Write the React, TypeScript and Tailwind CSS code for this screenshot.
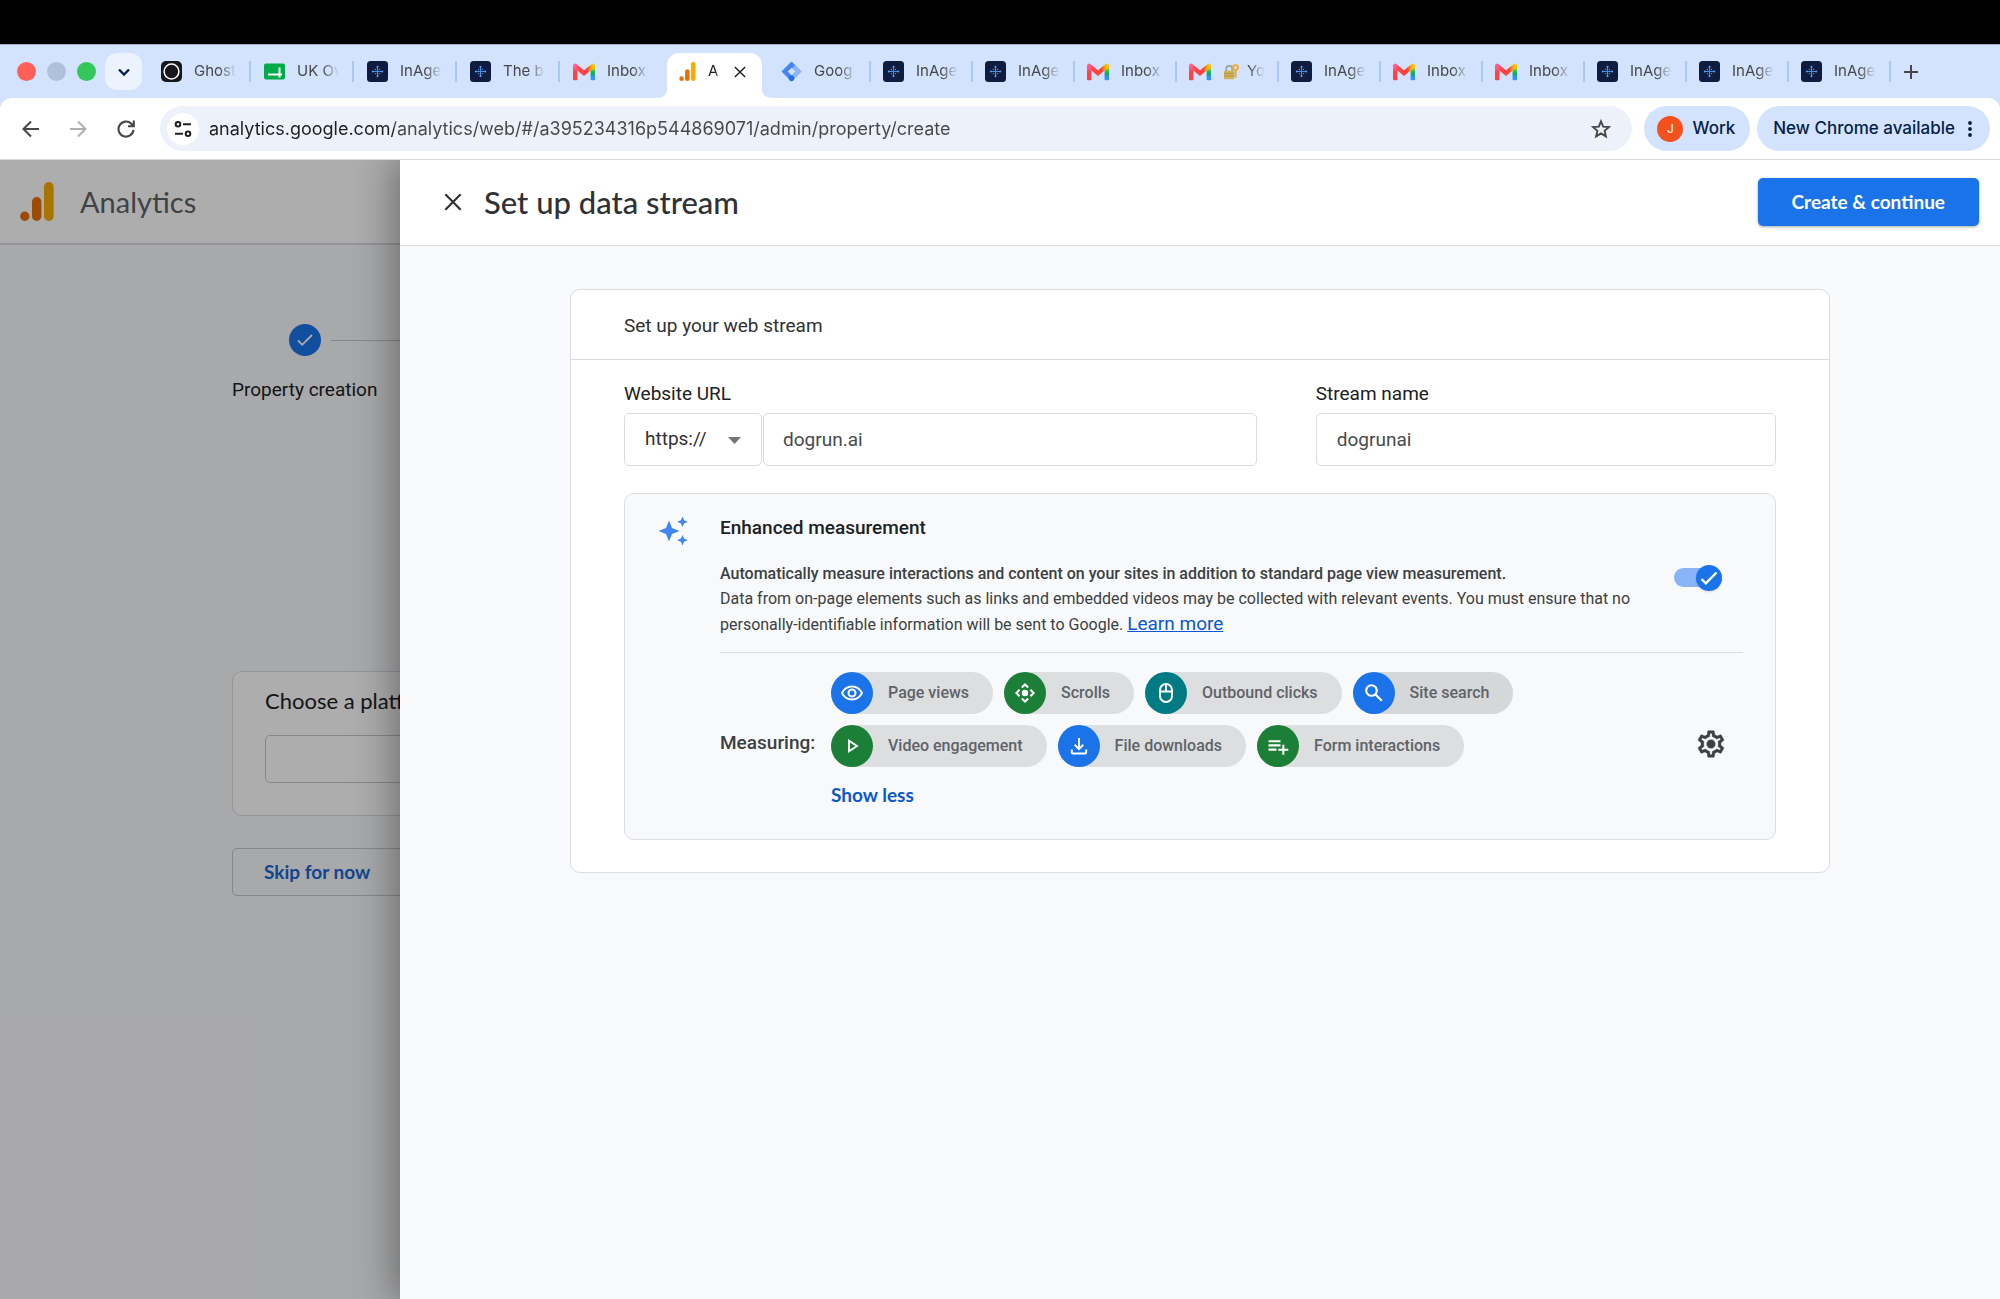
import { useState } from "react";

type IconProps = { className?: string };

function GhostIcon() {
  return (
    <svg className="size-[21px]" viewBox="0 0 21 21" aria-hidden="true">
      <rect width="21" height="21" rx="5" fill="#15171a" />
      <circle cx="10.5" cy="10.5" r="7.4" fill="none" stroke="#fff" strokeWidth="1.5" />
    </svg>
  );
}

function SheetIcon() {
  return (
    <svg className="size-[21px]" viewBox="0 0 21 21" aria-hidden="true">
      <rect y="2.5" width="21" height="16" rx="2" fill="#00ac47" />
      <path d="M4 13.5h14M15.500 6.500v10" stroke="#fff" strokeWidth="2" />
    </svg>
  );
}

function InAgentIcon() {
  return (
    <svg className="size-[21px]" viewBox="0 0 21 21" aria-hidden="true">
      <rect width="21" height="21" rx="3.5" fill="#0f1c3f" />
      <path d="M10.5 6v9M6 10.5h9" stroke="#4a90e2" strokeWidth="1.2" />
      <g fill="#5aa2f5">
        <circle cx="10.5" cy="5.8" r="1" />
        <circle cx="10.5" cy="15.2" r="1" />
        <circle cx="5.8" cy="10.5" r="1" />
        <circle cx="15.2" cy="10.5" r="1" />
        <circle cx="8.4" cy="8.4" r=".6" />
        <circle cx="12.6" cy="8.4" r=".6" />
        <circle cx="8.4" cy="12.6" r=".6" />
        <circle cx="12.6" cy="12.6" r=".6" />
      </g>
    </svg>
  );
}

function GmailIcon() {
  return (
    <svg className="size-[22px]" viewBox="0 0 22 22" aria-hidden="true">
      <defs>
        <linearGradient id="gm-left" x1="0" y1="0" x2="0" y2="1">
          <stop offset="0" stopColor="#ff63a0" />
          <stop offset=".45" stopColor="#ff4141" />
        </linearGradient>
        <linearGradient id="gm-right" x1="0" y1="0" x2="0" y2="1">
          <stop offset=".1" stopColor="#ffcf00" />
          <stop offset=".4" stopColor="#1db954" />
          <stop offset=".6" stopColor="#12a866" />
          <stop offset=".75" stopColor="#3290ff" />
        </linearGradient>
        <linearGradient id="gm-mid" x1="0" y1="0" x2="1" y2="0">
          <stop offset="0" stopColor="#ff5f93" />
          <stop offset=".25" stopColor="#ff4141" />
          <stop offset=".7" stopColor="#ff4141" />
          <stop offset=".95" stopColor="#ffc400" />
        </linearGradient>
      </defs>
      <path d="M0 5h4.4v13.2a1 1 0 0 1-1 1H1a1 1 0 0 1-1-1z" fill="url(#gm-left)" />
      <path d="M17.6 5H22v13.2a1 1 0 0 1-1 1h-2.4a1 1 0 0 1-1-1z" fill="url(#gm-right)" />
      <path d="M2.2 4.8 11 12.2l8.8-7.4" fill="none" stroke="url(#gm-mid)" strokeWidth="4.3" strokeLinecap="round" strokeLinejoin="miter" />
    </svg>
  );
}

function AnalyticsIcon({ className }: IconProps) {
  return (
    <svg className={className} viewBox="0 0 34 39" aria-hidden="true">
      <circle cx="4.8" cy="34.2" r="4.7" fill="#e8710a" />
      <rect x="12" y="15" width="9.4" height="24" rx="4.7" fill="#e8710a" />
      <rect x="24" y="0" width="9.6" height="39" rx="4.8" fill="#f9ab00" />
    </svg>
  );
}

function TagManagerIcon() {
  return (
    <svg className="size-[21px]" viewBox="0 0 21 21" aria-hidden="true">
      <path d="M10.5.8 20.2 10.5 10.5 20.2.8 10.5z" fill="#8ab4f8" stroke="#8ab4f8" strokeLinejoin="round" />
      <path d="M10.5.8 14 4.3 7.5 10.5 13.5 17 10.5 20.2.8 10.5z" fill="#4285f4" />
      <path d="M10.5 6.8 14.2 10.5 10.5 14.2 6.8 10.5z" fill="#d3e3fd" />
      <circle cx="10.5" cy="17.3" r="2.8" fill="#246fdb" />
    </svg>
  );
}

function LockKeyIcon() {
  return (
    <svg className="size-4 shrink-0" viewBox="0 0 16 16" aria-hidden="true">
      <path d="M3.2 7V4.8a3 3 0 0 1 6 0V7" fill="none" stroke="#9aa0a6" strokeWidth="1.7" />
      <rect x="1" y="6.5" width="10.5" height="8.8" rx="1.2" fill="#d0b35a" />
      <path d="M1 9.3h10.5M1 12h10.5" stroke="#a88a3c" strokeWidth=".7" />
      <circle cx="12.5" cy="3.5" r="2.4" fill="none" stroke="#f5a623" strokeWidth="1.8" />
      <path d="M12.7 6v7.5" stroke="#f5a623" strokeWidth="1.7" />
    </svg>
  );
}

function CloseIcon({ className }: IconProps) {
  return (
    <svg className={className} viewBox="0 0 20 20" fill="none" stroke="currentColor" strokeWidth="2.4" aria-hidden="true">
      <path d="M1.5 1.5l17 17M18.5 1.5l-17 17" />
    </svg>
  );
}

function EyeIcon() {
  return (
    <svg className="size-6" viewBox="0 0 24 24" fill="currentColor" aria-hidden="true">
      <path d="M12 6.5c3.79 0 7.17 2.13 8.82 5.5-1.65 3.37-5.03 5.5-8.82 5.5S4.83 15.37 3.18 12C4.83 8.63 8.21 6.5 12 6.5m0-2C7 4.5 2.73 7.61 1 12c1.73 4.39 6 7.5 11 7.5s9.27-3.11 11-7.5c-1.73-4.39-6-7.5-11-7.5zm0 5a2.5 2.5 0 1 1 0 5 2.5 2.5 0 0 1 0-5m0-2a4.5 4.5 0 1 0 0 9 4.5 4.5 0 0 0 0-9z" />
    </svg>
  );
}

function ScrollIcon() {
  return (
    <svg className="size-6" viewBox="0 0 24 24" fill="none" stroke="currentColor" strokeWidth="2.1" aria-hidden="true">
      <circle cx="12" cy="12" r="3.2" fill="currentColor" stroke="none" />
      <path d="M8.8 6.600 12 3.400l3.200 3.200M8.800 17.400l3.200 3.200 3.200-3.200M6.600 8.800 3.400 12l3.200 3.200M17.400 8.800l3.200 3.200-3.200 3.200" />
    </svg>
  );
}

function MouseIcon() {
  return (
    <svg className="size-6" viewBox="0 0 24 24" fill="none" stroke="currentColor" strokeWidth="2" aria-hidden="true">
      <rect x="6" y="3" width="12" height="18" rx="6" />
      <path d="M6 10.5h12M12 3v7.5" />
    </svg>
  );
}

function SearchIcon() {
  return (
    <svg className="size-6" viewBox="0 0 24 24" fill="none" stroke="currentColor" strokeWidth="2.1" aria-hidden="true">
      <circle cx="9.5" cy="9.5" r="5.3" />
      <path d="m13.5 13.5 6.3 6.3" />
    </svg>
  );
}

function PlayIcon() {
  return (
    <svg className="size-6" viewBox="0 0 24 24" fill="none" stroke="currentColor" strokeWidth="1.9" aria-hidden="true">
      <path d="M9 6.8v10.4l8-5.2z" />
    </svg>
  );
}

function DownloadIcon() {
  return (
    <svg className="size-6" viewBox="0 0 24 24" fill="none" stroke="currentColor" strokeWidth="2" aria-hidden="true">
      <path d="M12 4v11M7.7 10.8l4.3 4.3 4.3-4.3M4.8 15.500v2.700c0 .8.4 1.200 1.200 1.200h12c.8 0 1.200-.4 1.200-1.200v-2.700" />
    </svg>
  );
}

function FormIcon() {
  return (
    <svg className="size-6" viewBox="0 0 24 24" fill="none" stroke="currentColor" strokeWidth="2.1" aria-hidden="true">
      <path d="M2.5 7.2h12M2.5 11.4h12M2.5 15.6h8M17.3 10.8v10M12.3 15.8h10" />
    </svg>
  );
}

function SparkleIcon() {
  return (
    <svg className="size-[30px] text-[#4285f4]" viewBox="0 0 30 30" fill="currentColor" aria-hidden="true">
      <path d="M11 4.5 14 12l7.5 3-7.5 3-3 7.5L8 18 .5 15 8 12z" />
      <path d="m24.5.5 1.6 3.7 3.7 1.6-3.7 1.6-1.6 3.7-1.6-3.7-3.7-1.6 3.7-1.6zM24.5 18.9l1.6 3.7 3.7 1.6-3.7 1.6-1.6 3.7-1.6-3.7-3.7-1.6 3.7-1.6z" />
    </svg>
  );
}

function GearIcon() {
  return (
    <svg className="size-8" viewBox="0 0 24 24" fill="currentColor" stroke="currentColor" strokeWidth=".3" aria-hidden="true">
      <path d="M19.43 12.98c.04-.32.07-.64.07-.98 0-.34-.03-.66-.07-.98l2.11-1.65c.19-.15.24-.42.12-.64l-2-3.46c-.09-.16-.26-.25-.44-.25-.06 0-.12.01-.17.03l-2.49 1c-.52-.4-1.08-.73-1.69-.98l-.38-2.65C14.46 2.18 14.25 2 14 2h-4c-.25 0-.46.18-.49.42l-.38 2.65c-.61.25-1.17.59-1.69.98l-2.49-1c-.06-.02-.12-.03-.18-.03-.17 0-.34.09-.43.25l-2 3.46c-.13.22-.07.49.12.64l2.11 1.65c-.04.32-.07.65-.07.98 0 .33.03.66.07.98l-2.11 1.65c-.19.15-.24.42-.12.64l2 3.46c.09.16.26.25.44.25.06 0 .12-.01.17-.03l2.49-1c.52.4 1.08.73 1.69.98l.38 2.65c.03.24.24.42.49.42h4c.25 0 .46-.18.49-.42l.38-2.65c.61-.25 1.17-.59 1.69-.98l2.49 1c.06.02.12.03.18.03.17 0 .34-.09.43-.25l2-3.46c.12-.22.07-.49-.12-.64l-2.11-1.65zm-1.98-1.71c.04.31.05.52.05.73 0 .21-.02.43-.05.73l-.14 1.13.89.7 1.08.84-.7 1.21-1.27-.51-1.04-.42-.9.68c-.43.32-.84.56-1.25.73l-1.06.43-.16 1.13-.2 1.35h-1.4l-.19-1.35-.16-1.13-1.06-.43c-.43-.18-.83-.41-1.23-.71l-.91-.7-1.06.43-1.27.51-.7-1.21 1.08-.84.89-.7-.14-1.13c-.03-.31-.05-.54-.05-.74s.02-.43.05-.73l.14-1.13-.89-.7-1.08-.84.7-1.21 1.27.51 1.04.42.9-.68c.43-.32.84-.56 1.25-.73l1.06-.43.16-1.13.2-1.35h1.39l.19 1.35.16 1.13 1.06.43c.43.18.83.41 1.23.71l.91.7 1.06-.43 1.27-.51.7 1.21-1.07.85-.89.7.14 1.13z" />
      <circle cx="12" cy="12" r="3.2" />
    </svg>
  );
}

interface TabInfo {
  icon: React.ReactNode;
  title: React.ReactNode;
}

const leftTabs: TabInfo[] = [
  { icon: <GhostIcon />, title: "Ghost" },
  { icon: <SheetIcon />, title: "UK Ov" },
  { icon: <InAgentIcon />, title: "InAge" },
  { icon: <InAgentIcon />, title: "The b" },
  { icon: <GmailIcon />, title: "Inbox" },
];

const rightTabs: TabInfo[] = [
  { icon: <TagManagerIcon />, title: "Goog" },
  { icon: <InAgentIcon />, title: "InAge" },
  { icon: <InAgentIcon />, title: "InAge" },
  { icon: <GmailIcon />, title: "Inbox" },
  { icon: <GmailIcon />, title: <><LockKeyIcon />Yo</> },
  { icon: <InAgentIcon />, title: "InAge" },
  { icon: <GmailIcon />, title: "Inbox" },
  { icon: <GmailIcon />, title: "Inbox" },
  { icon: <InAgentIcon />, title: "InAge" },
  { icon: <InAgentIcon />, title: "InAge" },
  { icon: <InAgentIcon />, title: "InAge" },
];

function BrowserTab({ tab, separator = true }: { tab: TabInfo; separator?: boolean }) {
  return (
    <>
      <button type="button" className="flex h-[37px] w-[100px] min-w-0 items-center gap-3 pl-3 text-[#474747]">
        <span className="shrink-0">{tab.icon}</span>
        <span className="flex w-[42px] items-center gap-2 overflow-hidden whitespace-nowrap text-[15px] [mask-image:linear-gradient(to_right,black_60%,transparent)]">
          {tab.title}
        </span>
      </button>
      {separator && <span className="h-[21px] w-[2px] shrink-0 bg-[#a8c7fa]" />}
    </>
  );
}

function TabStrip() {
  return (
    <div className="flex h-[54px] items-start border-t border-[#9eb0c8] bg-[#d3e3fd] pt-2 pl-[17px]">
      <div className="flex h-[37px] shrink-0 items-center gap-[11px]">
        <span className="size-[19px] rounded-full bg-[#ff5f57]" />
        <span className="size-[19px] rounded-full bg-[#b0c1db]" />
        <span className="size-[19px] rounded-full bg-[#34c759]" />
      </div>
      <button type="button" aria-label="Search tabs" className="ml-[9px] grid size-[37px] shrink-0 place-items-center rounded-xl bg-[#ecf2fe] text-[#041e49]">
        <svg className="size-3" viewBox="0 0 12 12" fill="none" stroke="currentColor" strokeWidth="2.3" aria-hidden="true">
          <path d="m1 3.5 5 5 5-5" />
        </svg>
      </button>
      <nav aria-label="Tabs" className="flex h-[37px] min-w-0 items-center pl-[7px]">
        {leftTabs.map((tab, i) => (
          <div key={i} className="flex w-[103px] min-w-0 items-center">
            <BrowserTab tab={tab} separator={i < leftTabs.length - 1} />
          </div>
        ))}
        <div className="relative ml-[3px] flex h-[37px] w-[95px] shrink-0 items-center gap-3 self-start rounded-t-xl bg-white pl-3 text-[15px] text-[#1f1f1f]">
          <AnalyticsIcon className="h-[19px] w-[17px]" />
          <button type="button" className="w-[14px] overflow-hidden text-left [mask-image:linear-gradient(to_right,black_50%,transparent)]">A</button>
          <button type="button" aria-label="Close tab">
            <CloseIcon className="size-3" />
          </button>
          {/* foot of the active tab, flaring into the toolbar */}
          <svg className="absolute top-9 -left-3 h-[9px] w-[119px]" viewBox="0 0 119 9" fill="#fff" aria-hidden="true">
            <path d="M0 9c8 0 12-3 12-9h95c0 6 4 9 12 9z" />
          </svg>
        </div>
        {rightTabs.map((tab, i) => (
          <div key={i} className={i === 0 ? "flex w-[109px] min-w-0 items-center pl-[7px]" : "flex w-[102px] min-w-0 items-center"}>
            <BrowserTab tab={tab} />
          </div>
        ))}
      </nav>
      <button type="button" aria-label="New tab" className="grid h-[37px] w-10 place-items-center text-[#474747]">
        <svg className="size-[14px]" viewBox="0 0 14 14" stroke="currentColor" strokeWidth="2" aria-hidden="true">
          <path d="M7 0v14M0 7h14" />
        </svg>
      </button>
    </div>
  );
}

function Toolbar() {
  return (
    <div className="bg-[#d3e3fd]">
      <div className="flex h-[62px] items-center rounded-t-xl border-b border-[#dadce0] bg-white pr-[10px] pl-[22px] text-[#474747]">
        <button type="button" aria-label="Back">
          <svg className="size-[18px]" viewBox="0 0 18 18" fill="none" stroke="currentColor" strokeWidth="2.1" aria-hidden="true">
            <path d="M17 9H2M9 1.5 1.5 9 9 16.5" />
          </svg>
        </button>
        <button type="button" aria-label="Forward" className="ml-[29px] text-[#b0b0b0]">
          <svg className="size-[18px]" viewBox="0 0 18 18" fill="none" stroke="currentColor" strokeWidth="2" aria-hidden="true">
            <path d="M1 9h15M9 1.5 16.5 9 9 16.5" />
          </svg>
        </button>
        <button type="button" aria-label="Reload" className="ml-[30px]">
          <svg className="size-[18px]" viewBox="0 0 18 18" fill="none" stroke="currentColor" strokeWidth="2.1" aria-hidden="true">
            <path d="M16.5 9.8A7.5 7.5 0 1 1 14.3 3.7L16.3 5.7M16.8.5v5.8H11" />
          </svg>
        </button>
        <div className="ml-[25px] flex h-[45px] min-w-0 flex-1 items-center rounded-full bg-[#ecf1fa] pr-[21px] pl-[7px]">
          <button type="button" aria-label="Site information" className="grid size-8 shrink-0 place-items-center rounded-full bg-white text-[#1f1f1f]">
            <svg className="size-[18px]" viewBox="0 0 18 18" fill="none" stroke="currentColor" strokeWidth="2" aria-hidden="true">
              <circle cx="4" cy="4.3" r="2.3" />
              <path d="M9 4.3h8M1 13.7h8" />
              <circle cx="14" cy="13.7" r="2.3" />
            </svg>
          </button>
          <input
            aria-label="Address"
            defaultValue="analytics.google.com/analytics/web/#/a395234316p544869071/admin/property/create"
            className="ml-[10px] min-w-0 flex-1 bg-[linear-gradient(to_right,#1f1f1f_185px,#474747_185px)] bg-clip-text text-lg text-transparent outline-none"
          />
          <button type="button" aria-label="Bookmark this tab">
            <svg className="size-5" viewBox="0 0 20 20" fill="none" stroke="currentColor" strokeWidth="1.9" aria-hidden="true">
              <path d="m10 2.3 2.2 5.3 5.7.5-4.3 3.7 1.3 5.6L10 14.4l-4.9 3 1.3-5.6L2.1 8.1l5.7-.5z" />
            </svg>
          </button>
        </div>
        <button type="button" className="ml-3 flex h-[45px] shrink-0 items-center gap-[9px] rounded-full bg-[#d3e3fd] pr-[15px] pl-[13px] text-[17px] font-medium text-[#041e49]">
          <span className="grid size-[26px] place-items-center rounded-full bg-[#f4511e] text-xs font-normal text-white">J</span>
          Work
        </button>
        <button type="button" className="ml-[7px] flex h-[45px] shrink-0 items-center gap-[13px] rounded-full bg-[#d3e3fd] pr-[18px] pl-4 text-[17px] font-medium text-[#041e49]">
          New Chrome available
          <svg className="h-4 w-1" viewBox="0 0 4 16" fill="currentColor" aria-hidden="true">
            <circle cx="2" cy="2" r="1.9" />
            <circle cx="2" cy="8" r="1.9" />
            <circle cx="2" cy="14" r="1.9" />
          </svg>
        </button>
      </div>
    </div>
  );
}

function PropertyPage() {
  return (
    <div className="flex flex-1 flex-col bg-[#f8f9fb]">
      <header className="flex h-[85px] items-center gap-[26px] border-b-2 border-[#dadce0] bg-white pl-5">
        <AnalyticsIcon className="h-[39px] w-[34px]" />
        <span className="font-['Lato',sans-serif] text-[29px] text-[#5f6368]">Analytics</span>
      </header>
      <div className="flex flex-col pt-[79px] pl-[232px]">
        <div className="flex items-center">
          <div className="flex w-[146px] justify-center">
            <span className="grid size-8 place-items-center rounded-full bg-[#1a73e8] text-white">
              <svg className="size-4" viewBox="0 0 16 16" fill="none" stroke="currentColor" strokeWidth="1.8" aria-hidden="true">
                <path d="m1 8.5 4.2 4.3L15 3" />
              </svg>
            </span>
          </div>
          <span className="-ml-[47px] h-px flex-1 bg-[#c4c7cb]" />
        </div>
        <p className="mt-[22px] text-[19px] leading-6 text-[#202124]">Property creation</p>
        <section className="mt-[269px] rounded-l-[10px] border border-[#dadce0] bg-white pt-4 pb-8 pl-8">
          <h2 className="font-['Lato',sans-serif] text-[22px] leading-[26px] text-[#202124]">Choose a platform</h2>
          <div className="mt-[21px] h-12 rounded-l-[5px] border border-[#c4c7cb]" />
        </section>
        <button type="button" className="mt-8 h-12 rounded-l-[5px] border border-[#c4c7cb] pl-[31px] text-left font-['Lato',sans-serif] text-[19px] font-bold text-[#1967d2]">
          Skip for now
        </button>
      </div>
    </div>
  );
}

const chips = [
  { label: "Page views", icon: <EyeIcon />, color: "bg-[#1a73e8]", base: "bg-[#dddee0]" },
  { label: "Scrolls", icon: <ScrollIcon />, color: "bg-[#1b7f37]", base: "bg-[#dddee0]" },
  { label: "Outbound clicks", icon: <MouseIcon />, color: "bg-[#007b83]", base: "bg-[#dddee0]" },
  { label: "Site search", icon: <SearchIcon />, color: "bg-[#1a73e8]", base: "bg-[#d5d7d9]" },
  { label: "Video engagement", icon: <PlayIcon />, color: "bg-[#1b7f37]", base: "bg-[#dddee0]" },
  { label: "File downloads", icon: <DownloadIcon />, color: "bg-[#1a73e8]", base: "bg-[#dddee0]" },
  { label: "Form interactions", icon: <FormIcon />, color: "bg-[#1b7f37]", base: "bg-[#dddee0]" },
];

function EnhancedMeasurement() {
  const [enabled, setEnabled] = useState(true);

  return (
    <section className="mt-[27px] flex rounded-[10px] border border-[#dadce0] bg-[#f8f9fb] pt-[22px] pr-8 pb-6 pl-[33px]">
      <div className="w-[62px] shrink-0">
        <SparkleIcon />
      </div>
      <div className="min-w-0 flex-1">
        <h3 className="text-[19px] leading-6 font-medium text-[#202124]">Enhanced measurement</h3>
        <div className="mt-[21px] flex items-start border-b border-[#dadce0] pb-[15px]">
          <p className="min-w-0 flex-1 text-base leading-[25px] text-[#3c4043]">
            <strong className="font-medium">
              Automatically measure interactions and content on your sites in addition to standard page view measurement.
            </strong>
            <br />
            Data from on-page elements such as links and embedded videos may be collected with relevant events. You must ensure that no personally-identifiable information will be sent to Google.{" "}
            <a href="#learn-more" className="text-[19px] text-[#0b57d0] underline">Learn more</a>
          </p>
          <label className="mr-[21px] flex h-[33px] w-12 shrink-0 cursor-pointer items-center">
            <input
              type="checkbox"
              role="switch"
              aria-label="Enhanced measurement"
              checked={enabled}
              onChange={(e) => setEnabled(e.target.checked)}
              className="sr-only"
            />
            <span className={`flex h-[19px] w-full items-center rounded-full bg-[#8ab4f8] ${enabled ? "justify-end" : "justify-start"}`}>
              <span className="grid size-[26px] place-items-center rounded-full bg-[#1a73e8] text-white shadow">
                <svg className="size-[18px]" viewBox="0 0 18 18" fill="none" stroke="currentColor" strokeWidth="2.3" aria-hidden="true">
                  <path d="m1.5 10 4.3 4.3L16.5 3.5" />
                </svg>
              </span>
            </span>
          </label>
        </div>
        <div className="mt-[19px] flex items-center">
          <span className="w-[111px] shrink-0 text-[19px] font-medium text-[#3c4043]">Measuring:</span>
          <div className="flex min-w-0 flex-1 flex-col items-start gap-2">
            <ul className="flex flex-wrap gap-[11px]">
              {chips.map((chip) => (
                <li key={chip.label} className={`flex h-[42px] items-center gap-[15px] rounded-full pr-6 text-base font-medium text-[#5f6368] ${chip.base}`}>
                  <span className={`grid size-[42px] place-items-center rounded-full text-white ${chip.color}`}>{chip.icon}</span>
                  {chip.label}
                </li>
              ))}
            </ul>
            <button type="button" className="h-10 font-['Lato',sans-serif] text-[19px] font-bold text-[#0b57d0]">Show less</button>
          </div>
          <button type="button" aria-label="Settings" className="mr-4 ml-4 text-[#3c4043]">
            <GearIcon />
          </button>
        </div>
      </div>
    </section>
  );
}

function StreamDialog() {
  return (
    <div role="dialog" aria-labelledby="dialog-title" className="absolute inset-y-0 right-0 flex w-4/5 flex-col bg-[#f8f9fb] shadow-[0_0_40px_4px_rgba(0,0,0,0.4)]">
      <header className="flex h-[86px] shrink-0 items-center border-b border-[#dadce0] bg-white pr-[21px] pb-px pl-11 text-[#303134]">
        <button type="button" aria-label="Close">
          <CloseIcon className="size-[18px]" />
        </button>
        <h1 id="dialog-title" className="ml-[22px] flex-1 font-['Lato',sans-serif] text-[31px] font-medium">Set up data stream</h1>
        <button type="button" className="h-12 rounded-[5px] bg-[#1a73e8] px-[34px] font-['Lato',sans-serif] text-[19px] font-bold text-white shadow-[0_1px_3px_rgba(0,0,0,0.35)]">
          Create &amp; continue
        </button>
      </header>
      <div className="px-8 pt-[43px]">
        <div className="mx-auto max-w-[1260px] rounded-[10px] border border-[#dadce0] bg-white">
          <h2 className="border-b border-[#dadce0] px-[53px] pt-6 pb-[21px] text-[19px] leading-6 text-[#303134]">Set up your web stream</h2>
          <form className="px-[53px] pt-[22px] pb-8" onSubmit={(e) => e.preventDefault()}>
            <div className="grid grid-cols-[11fr_8fr] gap-[59px] text-[19px]">
              <div>
                <label htmlFor="website" className="block leading-6 text-[#202124]">Website URL</label>
                <div className="mt-[7px] flex gap-px">
                  <div className="relative w-[138px] shrink-0">
                    <select aria-label="Protocol" className="h-[53px] w-full appearance-none rounded-[5px] border border-[#dadce0] bg-white pl-5 text-[#303134]">
                      <option>https://</option>
                      <option>http://</option>
                    </select>
                    <svg className="pointer-events-none absolute top-6 right-[21px] h-[7px] w-[13px]" viewBox="0 0 13 7" fill="#757575" aria-hidden="true">
                      <path d="M0 0h13L6.5 7z" />
                    </svg>
                  </div>
                  <input id="website" defaultValue="dogrun.ai" className="h-[53px] min-w-0 flex-1 rounded-[5px] border border-[#dadce0] px-[19px] text-[#474a4d]" />
                </div>
              </div>
              <div>
                <label htmlFor="stream" className="block leading-6 text-[#202124]">Stream name</label>
                <input id="stream" defaultValue="dogrunai" className="mt-[7px] h-[53px] w-full rounded-[5px] border border-[#dadce0] px-5 text-[#474a4d]" />
              </div>
            </div>
            <EnhancedMeasurement />
          </form>
        </div>
      </div>
    </div>
  );
}

export default function App() {
  return (
    <div className="flex min-h-screen flex-col bg-black font-['Roboto',sans-serif]">
      <div className="h-11 shrink-0 bg-black" />
      <div className="font-['Inter',sans-serif]">
        <TabStrip />
        <Toolbar />
      </div>
      <main className="relative flex flex-1 overflow-hidden">
        <PropertyPage />
        <div className="absolute inset-0 bg-black/32" />
        <StreamDialog />
      </main>
    </div>
  );
}
